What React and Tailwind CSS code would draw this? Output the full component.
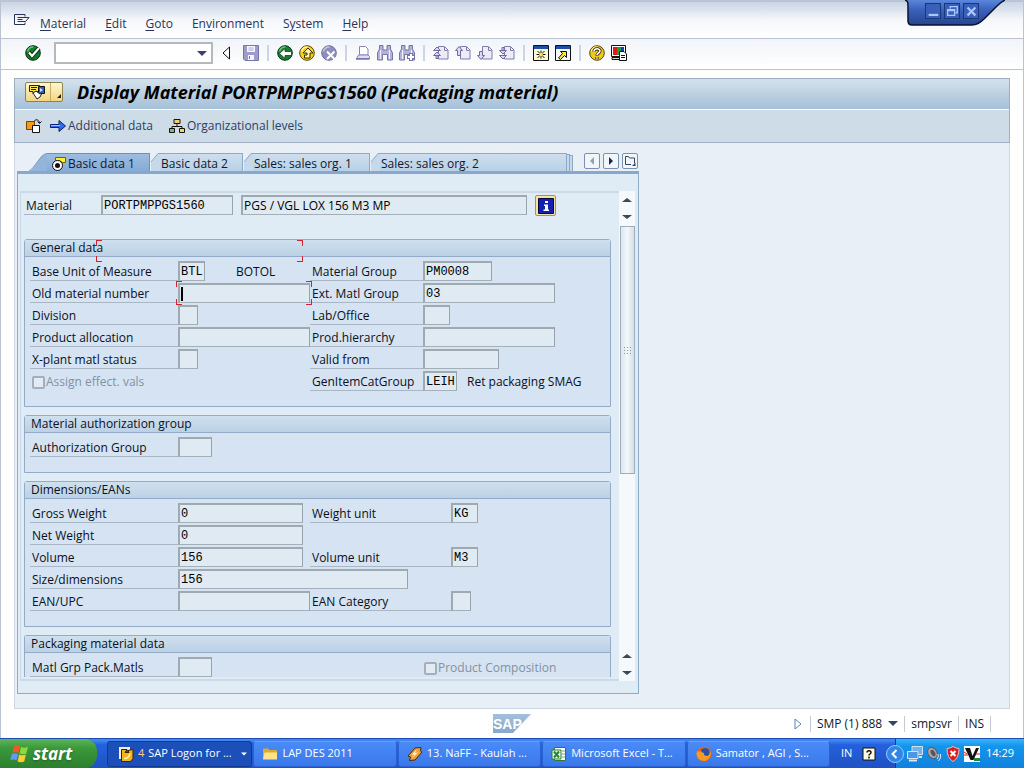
import clsx from "clsx";

const menuItems = [
  ["", "M", "aterial"],
  ["", "E", "dit"],
  ["", "G", "oto"],
  ["En", "v", "ironment"],
  ["S", "y", "stem"],
  ["", "H", "elp"],
];

const Icon = ({ children, className = "size-4", viewBox = "0 0 16 16" }) => (
  <svg viewBox={viewBox} className={clsx("shrink-0", className)} fill="none" aria-hidden="true">
    {children}
  </svg>
);

const IconButton = ({ label, children, className }) => (
  <button type="button" aria-label={label} title={label} className={clsx("flex shrink-0", className)}>
    {children}
  </button>
);

const Separator = () => <span className="mx-0.5 h-4 w-0.5 shrink-0 bg-[#ccd5e4]" />;

const PageIcon = ({ children }) => (
  <Icon>
    <path d="M5.500 1.500h6l3.500 3.500v9h-9.500z" fill="#ececf7" stroke="#7f7dae" />
    <path d="M11.500 2v3.500h3" stroke="#7f7dae" />
    <g stroke="#6c6a9e" fill="#dcdbee">
      {children}
    </g>
  </Icon>
);

const Ball = ({ fill, edge, shine }) => (
  <>
    <circle cx="8" cy="8" r="7.300" fill={fill} stroke={edge} />
    <path d="M2.500 6.500a6 6 0 0 1 6-4.500" stroke={shine} strokeWidth="1.500" />
  </>
);

const Binoculars = () => (
  <>
    <path
      d="M.5 15V8L2.500 4V.5h3.500V5h4V.5h3.500V4l2 4v7h-5V9.500h-5V15z"
      fill="#b3b2d8"
      stroke="#7775a6"
    />
    <path d="M3.500 5v9M12.500 5v9" stroke="#f2f2fb" />
  </>
);

const MenuBar = () => (
  <nav className="relative flex h-[37px] items-center border-b border-[#bcc3cd] bg-linear-to-b from-[#c9d4e4] via-[#f5f7fb] via-50% to-white pt-2 pl-[13px] text-[12px] text-[#28335a]">
    <IconButton label="System menu" className="-mt-2 mr-2.5">
      <Icon>
        <path d="M11 4.500V2.500H.5v10H11v-2" stroke="#28335a" />
        <path d="M3.500 5.500H15L11.500 9.500h-8M3.500 7.500h5" stroke="#28335a" />
      </Icon>
    </IconButton>
    <div className="flex gap-[19px]">
      {menuItems.map(([before, key, after]) => (
        <button type="button" key={before + key + after}>
          {before}
          <u className="underline-offset-2">{key}</u>
          {after}
        </button>
      ))}
    </div>
    <div className="absolute -top-0.5 right-[18px] h-[28px] w-[100px]">
      <svg viewBox="0 0 100 28" className="absolute inset-0 size-full" aria-hidden="true">
        <defs>
          <linearGradient id="chip" x1="0" y1="0" x2="0" y2="1">
            <stop offset="0" stopColor="#5a86dc" />
            <stop offset="0.4" stopColor="#3a61ba" />
            <stop offset="1" stopColor="#24458f" />
          </linearGradient>
        </defs>
        <path d="M0 0C3 1 3 3 3 6v15q0 4 4 4h60q6 0 12-6L92 6q4-4 8-6z" fill="url(#chip)" />
        <path
          d="M0 0C3 1 3 3 3 6v15q0 4 4 4h60q6 0 12-6L92 6q4-4 8-6"
          fill="none"
          stroke="#0a1230"
          strokeWidth="1.500"
        />
      </svg>
      <div className="relative flex gap-[3px] pt-[3px] pl-[20px]">
        <IconButton label="Minimize" className="size-4 border border-[#1b3679] bg-[#3a5fb8]">
          <Icon className="size-3.5">
            <path d="M3 12.500h11" stroke="#a9c8ff" strokeWidth="2.500" />
          </Icon>
        </IconButton>
        <IconButton label="Restore" className="size-4 border border-[#1b3679] bg-[#3a5fb8]">
          <Icon className="size-3.5">
            <path d="M6 5V3h8v7h-2" stroke="#a9c8ff" strokeWidth="1.500" />
            <path d="M3 6.500h8V13H3zM3 7.500h8" stroke="#a9c8ff" strokeWidth="1.500" />
          </Icon>
        </IconButton>
        <IconButton label="Close" className="size-4 border border-[#1b3679] bg-[#3a5fb8]">
          <Icon className="size-3.5">
            <path d="M4 4l9 9M13 4l-9 9" stroke="#a9c8ff" strokeWidth="2.500" />
          </Icon>
        </IconButton>
      </div>
    </div>
  </nav>
);

const Toolbar = () => (
  <div className="flex h-[31px] items-center gap-1.5 border-b border-[#bcc3cd] bg-linear-to-b from-[#f1f4f9] to-white pb-0.5 pl-6">
    <IconButton label="Enter" className="mr-[7px]">
      <Icon>
        <Ball fill="#147a2c" edge="#06300f" shine="#6cc47e" />
        <path d="M4 7.500l3 3.500 7-8" stroke="#04240a" strokeWidth="4" />
        <path d="M4 7.500l3 3.500 7-8" stroke="#fff" strokeWidth="2.200" />
      </Icon>
    </IconButton>
    <div className="relative flex">
      <input
        type="text"
        aria-label="Command"
        defaultValue=""
        className="h-[22px] w-[159px] border-2 border-[#b3b9bc] bg-white px-1 text-[12px] outline-none"
      />
      <IconButton label="Command history" className="absolute top-1.5 right-1.5">
        <Icon className="h-2.5 w-2.5" viewBox="0 0 10 10">
          <path d="M0 3h10L5 8z" fill="#37436e" />
        </Icon>
      </IconButton>
    </div>
    <IconButton label="Collapse">
      <Icon>
        <path d="M10.500 2v12L4 8z" fill="#fff" stroke="#111" />
      </Icon>
    </IconButton>
    <IconButton label="Save" className="ml-0.5">
      <Icon>
        <path d="M.5.500h15v15H2L.5 14z" fill="#9d9ccb" stroke="#7775a6" />
        <path d="M4 1h8v6H4z" fill="#f5f5fc" />
        <path d="M5 10h6v5H5z" fill="#f5f5fc" />
        <path d="M5.500 3h5M5.500 5h5" stroke="#a8a7d0" />
        <path d="M6.500 11v3" stroke="#7775a6" />
      </Icon>
    </IconButton>
    <Separator />
    <IconButton label="Back">
      <Icon>
        <Ball fill="#17802f" edge="#06300f" shine="#6cc47e" />
        <path d="M2.500 8.500L8 3.500v3h6.500v4H8v3z" fill="#fff" stroke="#06300f" strokeWidth=".7" />
      </Icon>
    </IconButton>
    <IconButton label="Exit">
      <Icon>
        <Ball fill="#f4cf1c" edge="#5b4704" shine="#fff4a0" />
        <path d="M9 3l5 5h-3v5H5.500v-3H8V8H4z" fill="#fff7b0" stroke="#3a2b00" />
      </Icon>
    </IconButton>
    <IconButton label="Cancel">
      <Icon>
        <Ball fill="#8f8dbb" edge="#7270a2" shine="#c6c5e2" />
        <path d="M6 6.500l7.500 7.500M13.500 6.500L6 14" stroke="#fff" strokeWidth="2" />
      </Icon>
    </IconButton>
    <Separator />
    <IconButton label="Print">
      <Icon>
        <path d="M4.500 1.500h6l2.500 2.500v6h-8.500z" fill="#fff" stroke="#8886b4" />
        <path d="M1.500 13.500l2-3.500h9.500l1.500 1.500v2z" fill="#dddcf0" stroke="#8886b4" />
        <path d="M1 14h13.500" stroke="#7775a6" strokeWidth="1.500" />
      </Icon>
    </IconButton>
    <IconButton label="Find">
      <Icon>
        <Binoculars />
      </Icon>
    </IconButton>
    <IconButton label="Find next">
      <Icon>
        <Binoculars />
        <path d="M12 8v8M8 12h8" stroke="#7775a6" strokeWidth="4" />
        <path d="M12 9v6M9 12h6" stroke="#fff" strokeWidth="2" />
      </Icon>
    </IconButton>
    <Separator />
    <IconButton label="First page">
      <PageIcon>
        <path d="M.5 5.500l3.500-3.500 3.500 3.500zM.5 10.500L4 7l3.500 3.500zM3 11v2.500h2V11" />
      </PageIcon>
    </IconButton>
    <IconButton label="Previous page">
      <PageIcon>
        <path d="M.5 5.500L4 1.500l3.500 4h-2v5h-3v-5z" />
      </PageIcon>
    </IconButton>
    <IconButton label="Next page">
      <PageIcon>
        <path d="M.5 10.500l3.500 4 3.500-4h-2v-4h-3v4z" />
      </PageIcon>
    </IconButton>
    <IconButton label="Last page">
      <PageIcon>
        <path d="M3 5V2.500h2V5M.5 5.500L4 9l3.500-3.500zM.5 10.500L4 14l3.500-3.500z" />
      </PageIcon>
    </IconButton>
    <Separator />
    <IconButton label="New session">
      <Icon>
        <path d="M.5.500h15v15H.5z" fill="#fffbd0" stroke="#111" />
        <path d="M1 1h14v3H1z" fill="#1f4fa3" />
        <path d="M8 5.500v8M3.500 9.500h9M4.500 6l7 7M11.500 6l-7 7" stroke="#111" />
        <circle cx="8" cy="9.500" r="1.800" fill="#ffe83c" />
      </Icon>
    </IconButton>
    <IconButton label="Create shortcut">
      <Icon>
        <path d="M.5.500h15v15H.5z" fill="#f3f6fb" stroke="#111" />
        <path d="M1 1h14v3H1z" fill="#1f4fa3" />
        <path d="M5.500 6.500h6v6l-2-2-4 4-2-1.500 4-4.500z" fill="#ffe83c" stroke="#111" />
      </Icon>
    </IconButton>
    <Separator />
    <IconButton label="Help">
      <Icon>
        <Ball fill="#f2c81b" edge="#5b4704" shine="#fff4a0" />
        <path d="M5 6.500C5 3 11 3 11 6c0 2-3 2-3 4.500M8 12v2" stroke="#2b1f00" strokeWidth="3.200" />
        <path d="M5 6.500C5 3 11 3 11 6c0 2-3 2-3 4M8 12.200v1.500" stroke="#fff" strokeWidth="1.600" />
      </Icon>
    </IconButton>
    <IconButton label="Customize local layout">
      <Icon>
        <path d="M.5.500h14v11H.5z" fill="#fff" stroke="#111" />
        <path d="M2 2h4v8H2z" fill="#e01919" />
        <path d="M6 2h4v8H6z" fill="#0ca63d" />
        <path d="M10 2h3v8h-3z" fill="#2036c8" />
        <path d="M1 12.500h8v2H1z" fill="#d8d8d8" stroke="#111" />
        <path d="M8.500 6.500h4.500l2.500 2.500v6.500h-7z" fill="#fff" stroke="#111" />
        <path d="M10 10.500h4M10 12.500h4" stroke="#111" />
      </Icon>
    </IconButton>
  </div>
);

const Header = () => (
  <header className="border border-[#9fafc1] bg-[#cddce7]">
    <div className="flex h-[31px] items-center gap-3.5 border-b border-white bg-linear-to-b from-[#d0dfea] from-10% via-[#b4cbdd] via-65% to-[#a6c1da] pb-1 pl-2.5">
      <button
        type="button"
        aria-label="Services for object"
        className="flex h-5 w-[38px] items-center rounded-[2px] border border-[#8c8250] bg-linear-to-b from-[#fff6cf] to-[#f3d77e] pl-0.5"
      >
        <Icon className="h-4 w-5" viewBox="0 0 20 16">
          <path d="M1.500 1.500h10v6H7l-2 2v-2H1.500z" fill="#ffe94a" stroke="#222" />
          <path d="M3 3.500h6M3 5.500h5" stroke="#222" />
          <path d="M10.500 2.500h6v7h-6z" fill="#2f62b5" stroke="#111" />
          <path d="M12 4l3 2-3 2z" fill="#cfe0ff" />
          <path d="M5 9l3-2 4 3 2-1-2 4-3 2z" fill="#fff" stroke="#222" />
        </Icon>
        <span className="ml-0.5 h-full w-px bg-[#c6ae62]" />
        <Icon className="mt-2 ml-1.5 size-1" viewBox="0 0 4 4">
          <path d="M4 0v4H0z" fill="#222" />
        </Icon>
      </button>
      <h1 className="text-[18px] leading-6 font-bold whitespace-nowrap text-black italic">
        Display Material PORTPMPPGS1560 (Packaging material)
      </h1>
    </div>
    <div className="flex h-8 items-center gap-2 pl-[11px] text-[12px] text-[#2c3f68]">
      <IconButton label="Select view">
        <Icon>
          <path d="M.5 3.500h8v8h-8z" fill="#f29a1c" stroke="#7a4300" />
          <path d="M6.500 7.500h7v7h-7z" fill="#fff" stroke="#111" />
          <path d="M8 3.500C9 1 13 1 13.500 5M11.500 3.500l2 2 2-2" stroke="#111" />
        </Icon>
      </IconButton>
      <button type="button" className="flex items-center gap-0.5">
        <Icon>
          <path d="M.5 6.500h8.500V2.500L15.500 8 9 13.500V9.500H.5z" fill="#2f6cf0" stroke="#0b1f6b" />
          <path d="M1 7.500h9" stroke="#9cc2ff" />
        </Icon>
        Additional data
      </button>
      <button type="button" className="ml-2 flex items-center gap-0.5">
        <Icon>
          <path d="M8 5v3.500M3 11V8.500h10V11" stroke="#111" />
          <path d="M5 1.500h6v4H5z" fill="#f0d27a" stroke="#111" />
          <path d="M.5 10.500h5v4h-5z" fill="#7fb98a" stroke="#111" />
          <path d="M10.500 10.500h5v4h-5z" fill="#e6df5e" stroke="#111" />
        </Icon>
        Organizational levels
      </button>
    </div>
  </header>
);

const Tab = ({ label, active, className }) => (
  <button
    type="button"
    role="tab"
    aria-selected={Boolean(active)}
    className={clsx("flex h-[18px] shrink-0 text-[12px] text-[#10182c]", !active && "ml-px")}
  >
    <svg
      viewBox={active ? "0 0 18 18" : "0 0 9 18"}
      className={clsx("h-[18px] shrink-0", active ? "w-[18px]" : "w-[9px]")}
      fill="none"
      aria-hidden="true"
    >
      {active ? (
        <>
          <path d="M0 18C6 17 10 .5 18 .5V18z" fill="#93b5da" />
          <path d="M0 18C5 16 12 .5 18 .5" stroke="#7d9cc0" />
        </>
      ) : (
        <>
          <path d="M0 9L7 .5h2V18H0z" fill="#c6d9ea" />
          <path d="M0 9L7 .5h2" stroke="#8da9c4" />
        </>
      )}
    </svg>
    <span
      className={clsx(
        "flex h-full items-center gap-px border-t border-r pt-0.5 leading-4",
        active
          ? "border-[#6e90ba] bg-linear-to-b from-[#9dbde0] to-[#86abd5] pl-1"
          : "border-[#8da9c4] bg-linear-to-b from-[#cddfee] to-[#b9d0e6] pl-px",
        className
      )}
    >
      {active && (
        <Icon>
          <path d="M4.500 1.500h10v5h-3l-3-2h-4z" fill="#ffee2e" stroke="#6f6400" />
          <circle cx="6.500" cy="9.500" r="5" fill="#fff" stroke="#111" />
          <circle cx="6.500" cy="9.500" r="2.500" fill="#111" />
        </Icon>
      )}
      {label}
    </span>
  </button>
);

const TabNav = ({ label, children }) => (
  <IconButton
    label={label}
    className="size-4 items-center justify-center rounded-[2px] border border-[#7d90ae] bg-[#f1f6fb]"
  >
    {children}
  </IconButton>
);

const TabStrip = () => (
  <div className="flex pr-px pl-3">
    <div role="tablist" className="flex">
      <Tab label="Basic data 1" active className="w-[103px]" />
      <Tab label="Basic data 2" className="w-[83px]" />
      <Tab label="Sales: sales org. 1" className="w-[117px]" />
      <Tab label="Sales: sales org. 2" className="w-[187px]" />
    </div>
    <span className="mt-px h-[17px] w-[3px] border-t border-r border-[#8da9c4] bg-[#c6d9ea]" />
    <span className="mt-0.5 h-4 w-[3px] border-t border-r border-[#8da9c4] bg-[#c6d9ea]" />
    <div className="ml-auto flex gap-[3px]">
      <TabNav label="Scroll tabs left">
        <Icon className="size-2" viewBox="0 0 8 8">
          <path d="M6 0v8L2 4z" fill="#94a1b4" />
        </Icon>
      </TabNav>
      <TabNav label="Scroll tabs right">
        <Icon className="size-2" viewBox="0 0 8 8">
          <path d="M2 0v8l4-4z" fill="#1c2a4a" />
        </Icon>
      </TabNav>
      <TabNav label="Tab list">
        <Icon className="size-3" viewBox="0 0 12 12">
          <path d="M7 9.500H1.500v-8h3l1 1.500h5V8" stroke="#33456c" />
          <path d="M11.500 7.500V11H8z" fill="#33456c" />
        </Icon>
      </TabNav>
    </div>
  </div>
);

const Brackets = ({ className }) => (
  <span className={clsx("pointer-events-none absolute", className)}>
    <span className="absolute top-0 left-0 size-1.5 border-t border-l border-[#cf2233]" />
    <span className="absolute top-0 right-0 size-1.5 border-t border-r border-[#cf2233]" />
    <span className="absolute bottom-0 left-0 size-1.5 border-b border-l border-[#cf2233]" />
    <span className="absolute right-0 bottom-0 size-1.5 border-r border-b border-[#cf2233]" />
  </span>
);

const Box = ({ id, value = "", className, label, sans }) => (
  <input
    id={id}
    type="text"
    aria-label={label}
    readOnly
    value={value}
    className={clsx(
      "h-5 shrink-0 border-t-2 border-r border-b border-l-2 border-t-[#9ea9b0] border-r-[#98a3ab] border-b-[#a4afb7] border-l-[#9ea9b0] bg-[#dfeaf2] pl-px text-[12px] text-black outline-none",
      !sans && "font-['Liberation_Mono',monospace]",
      className
    )}
  />
);

const Label = ({ htmlFor, children, className }) => (
  <label
    htmlFor={htmlFor}
    className={clsx("h-5 shrink-0 border-b border-[#a9b7c4] pl-0.5 leading-[22px] whitespace-nowrap", className)}
  >
    {children}
  </label>
);

// one line of a group: an optional field on the left and one on the right
const Row = ({ left, right, rightLabel = "w-[113px]" }) => (
  <div className="mb-0.5 flex h-5">
    <div className="flex w-[280px] shrink-0">
      {left && (
        <>
          <Label htmlFor={left.id} className="w-[148px]">
            {left.label}
          </Label>
          <span className="relative flex">
            <Box id={left.id} value={left.value} className={left.width} />
            {left.focused && (
              <>
                <Brackets className="-inset-x-0.5 -inset-y-0.5 z-10" />
                <span className="absolute top-1 left-[3px] h-3.5 w-0.5 bg-black" />
              </>
            )}
          </span>
          {left.text && <span className="pl-[31px] leading-[22px]">{left.text}</span>}
        </>
      )}
    </div>
    {right && (
      <>
        <Label htmlFor={right.id} className={rightLabel}>
          {right.label}
        </Label>
        <Box id={right.id} value={right.value} className={right.width} />
      </>
    )}
  </div>
);

const Check = ({ label, className }) => (
  <label className={clsx("flex h-5 items-center gap-px pt-0.5 text-[#8492a0]", className)}>
    <input
      type="checkbox"
      disabled
      className="size-[13px] appearance-none rounded-[2px] border-2 border-[#a3afba] bg-[#e2ebf3]"
    />
    {label}
  </label>
);

const Group = ({ title, children, className = "mb-2 border-b pb-[13px]" }) => (
  <section className={clsx("rounded-t-[3px] border-x border-t border-[#93abc6] bg-[#d5e3f3]", className)}>
    <h2 className="h-[17px] border-b border-[#93abc6] bg-linear-to-b from-[#cfe0ee] to-[#bcd1e6] pl-1.5 leading-4">
      {title}
    </h2>
    <div className="pt-1 pl-[5px]">{children}</div>
  </section>
);

const Arrow = ({ label, up }) => (
  <IconButton label={label} className="h-[17px] w-4 items-center justify-center bg-[#f6f9fc]">
    <Icon className="size-2.5" viewBox="0 0 10 10">
      <path d={up ? "M0 7l5-4 5 4z" : "M0 3h10L5 7z"} fill="#3c4a54" />
    </Icon>
  </IconButton>
);

const ScrollBar = () => (
  <div className="flex w-4 shrink-0 flex-col bg-[#f6f9fc]">
    <Arrow label="Scroll up" up />
    <Arrow label="Scroll down" />
    <div className="flex-1">
      <div className="mt-px ml-px flex h-[248px] items-center justify-center border border-[#9fadba] bg-linear-to-r from-[#dde7ef] via-[#f3f7fa] to-[#d3dfe9]">
        <span className="grid grid-cols-3 gap-0.5">
          {Array.from({ length: 9 }, (_, i) => (
            <i key={i} className="size-px bg-[#8394a5]" />
          ))}
        </span>
      </div>
    </div>
    <Arrow label="Page up" up />
    <Arrow label="Page down" />
  </div>
);

const MaterialForm = () => (
  <div className="flex border-x border-t-[3px] border-b border-[#8eabc8] border-t-[#85a8cf] bg-[#dfebf5] pt-[17px] pr-[3px] pb-3 pl-0.5">
    <div className="min-w-0 flex-1 border-y-2 border-l border-[#cddae5] pr-2 pb-0.5 pl-[3px] text-[12px] text-[#0b1020]">
      <div className="mt-0.5 mb-6 flex h-5">
        <Label htmlFor="material" className="w-[77px]">
          Material
        </Label>
        <Box id="material" value="PORTPMPPGS1560" className="w-[132px]" />
        <Box
          id="description"
          label="Description"
          value="PGS / VGL LOX 156 M3 MP"
          className="ml-2 w-[286px]"
          sans
        />
        <IconButton
          label="Info"
          className="ml-2 h-[21px] w-[21px] items-center justify-center rounded-[2px] border border-[#a8924f] bg-[#f7e3a6]"
        >
          <Icon>
            <path d="M.5.500h15v15H.5z" fill="#1420b4" stroke="#05083a" />
            <path d="M7 3h3v2H7zM6 6.500h4v5h1V13H5.500v-1.500H7V8H6z" fill="#fff" />
          </Icon>
        </IconButton>
      </div>

      <div className="relative">
        <Group title="General data">
          <Row
            left={{ id: "uom", label: "Base Unit of Measure", value: "BTL", width: "w-[27px]", text: "BOTOL" }}
            right={{ id: "matgroup", label: "Material Group", value: "PM0008", width: "w-[69px]" }}
          />
          <Row
            left={{ id: "oldnumber", label: "Old material number", width: "w-[132px]", focused: true }}
            right={{ id: "extgroup", label: "Ext. Matl Group", value: "03", width: "w-[132px]" }}
          />
          <Row
            left={{ id: "division", label: "Division", width: "w-5" }}
            right={{ id: "lab", label: "Lab/Office", width: "w-[27px]" }}
          />
          <Row
            left={{ id: "allocation", label: "Product allocation", width: "w-[132px]" }}
            right={{ id: "hierarchy", label: "Prod.hierarchy", width: "w-[132px]" }}
          />
          <Row
            left={{ id: "xplant", label: "X-plant matl status", width: "w-5" }}
            right={{ id: "validfrom", label: "Valid from", width: "w-[76px]" }}
          />
          <div className="mb-0.5 flex h-5">
            <Check label="Assign effect. vals" className="w-[280px] pl-0.5" />
            <Label htmlFor="itemcat" className="w-[113px]">
              GenItemCatGroup
            </Label>
            <Box id="itemcat" value="LEIH" className="w-[34px]" />
            <span className="pl-2.5 leading-[22px] whitespace-nowrap">Ret packaging SMAG</span>
          </div>
        </Group>
        <Brackets className="top-px left-[72px] h-[22px] w-[207px]" />
      </div>

      <Group title="Material authorization group">
        <Row left={{ id: "authgroup", label: "Authorization Group", width: "w-[34px]" }} />
      </Group>

      <Group title="Dimensions/EANs">
        <Row
          left={{ id: "gross", label: "Gross Weight", value: "0", width: "w-[125px]" }}
          right={{ id: "weightunit", label: "Weight unit", value: "KG", width: "w-[27px]" }}
          rightLabel="w-[141px]"
        />
        <Row left={{ id: "net", label: "Net Weight", value: "0", width: "w-[125px]" }} />
        <Row
          left={{ id: "volume", label: "Volume", value: "156", width: "w-[125px]" }}
          right={{ id: "volumeunit", label: "Volume unit", value: "M3", width: "w-[27px]" }}
          rightLabel="w-[141px]"
        />
        <Row left={{ id: "size", label: "Size/dimensions", value: "156", width: "w-[230px]" }} />
        <Row
          left={{ id: "ean", label: "EAN/UPC", width: "w-[132px]" }}
          right={{ id: "eancat", label: "EAN Category", width: "w-5" }}
          rightLabel="w-[141px]"
        />
      </Group>

      <Group title="Packaging material data" className="">
        <div className="flex">
          <Label htmlFor="packgroup" className="w-[148px]">
            Matl Grp Pack.Matls
          </Label>
          <Box id="packgroup" className="w-[34px]" />
          <Check label="Product Composition" className="ml-[212px]" />
        </div>
      </Group>
    </div>
    <ScrollBar />
  </div>
);

const StatusBar = () => (
  <footer className="grid h-[29px] grid-cols-3 items-center px-8 text-[12px] text-[#10182c]">
    <span />
    <svg viewBox="0 0 38 19" className="h-[19px] w-[38px] justify-self-center" role="img" aria-label="SAP">
      <defs>
        <linearGradient id="sap" x1="0" y1="0" x2="0" y2="1">
          <stop offset="0" stopColor="#a3bfdb" />
          <stop offset="1" stopColor="#87a9cc" />
        </linearGradient>
      </defs>
      <path d="M0 0h38L20 19H0z" fill="url(#sap)" />
      <text x="0" y="14.500" fill="#fff" fontSize="14" fontWeight="700" fontFamily="Liberation Sans, sans-serif">
        SAP
      </text>
    </svg>
    <div className="flex items-center justify-end gap-1.5 whitespace-nowrap">
      <IconButton label="Show messages">
        <Icon className="size-3" viewBox="0 0 12 12">
          <path d="M3 1v10l6-5z" fill="#fff" stroke="#5c80b3" />
        </Icon>
      </IconButton>
      <span className="h-4 w-px bg-[#c4cad3]" />
      <span>SMP (1) 888</span>
      <IconButton label="System info">
        <Icon className="size-2.5" viewBox="0 0 10 10">
          <path d="M0 2h10L5 7z" fill="#33436e" />
        </Icon>
      </IconButton>
      <span className="h-4 w-px bg-[#c4cad3]" />
      <span>smpsvr</span>
      <span className="h-4 w-px bg-[#c4cad3]" />
      <span>INS</span>
      <span className="h-4 w-px bg-[#c4cad3]" />
    </div>
  </footer>
);

const Task = ({ icon, label, active }) => (
  <button
    type="button"
    className={clsx(
      "flex h-[26px] min-w-0 flex-1 items-center gap-1 rounded-[3px] border text-left whitespace-nowrap",
      active
        ? "border-[#123a94] bg-[#1c4fb8] pl-2.5"
        : "border-[#2a62d6] border-t-[#6ba0fa] bg-linear-to-b from-[#4a8bf7] to-[#3a78ea] pl-2"
    )}
  >
    <Icon>{icon}</Icon>
    {label}
    {active && (
      <Icon className="mr-1 ml-auto size-1.5" viewBox="0 0 6 6">
        <path d="M0 1.500h6L3 4.500z" fill="#fff" />
      </Icon>
    )}
  </button>
);

const Taskbar = () => (
  <div className="flex h-[30px] items-center border-t border-[#1c4cb4] bg-linear-to-b from-[#3f86f2] from-5% via-[#2560dc] via-20% to-[#1f52c4] text-[11px] text-white">
    <button
      type="button"
      className="flex h-full w-[97px] shrink-0 items-center gap-1 rounded-r-xl bg-linear-to-b from-[#5fb45c] via-[#3c9a3b] via-30% to-[#2c7f2e] pl-2.5 text-[17px] font-bold text-white italic text-shadow-md"
    >
      <Icon className="size-[19px]" viewBox="0 0 18 18">
        <path d="M4 2q3-2 5.500 0L8 8.500Q5 6.500 2 8.500z" fill="#ee5a24" />
        <path d="M10.500 2.500q3 2 6.500 0l-1.500 6.500q-3 1.500-6.500-.3z" fill="#8ed83a" />
        <path d="M1.700 9.500q3-1.700 6 0l-1.500 6q-3-1.700-6 0z" fill="#5c9cf5" />
        <path d="M8.700 10q3 1.500 6.300 0l-1.500 6.500q-3 1.500-6.300 0z" fill="#fccf2e" />
      </Icon>
      start
    </button>
    <div className="flex min-w-0 flex-1 gap-px pl-2.5">
      <Task
        active
        label={
          <>
            <span className="text-[#ffc9a0]">4</span> SAP Logon for ...
          </>
        }
        icon={
          <>
            <path d="M1 1h11v3H4v9H1z" fill="#e8f0fa" />
            <path d="M3.500 3.500H9l-2 3h4l-1-2 5-1v9l-2.500 3h-9z" fill="#f6b21b" stroke="#3a2600" />
            <path d="M6 12.500q5 0 6-5" stroke="#fff3b0" strokeWidth="1.500" />
          </>
        }
      />
      <Task
        label="LAP DES 2011"
        icon={
          <>
            <path d="M1 3.500q0-1 1-1h4l1.500 1.500H14q1 0 1 1v8H1z" fill="#e2a92f" />
            <path d="M1 13.500l1.500-7H15v7z" fill="#ffe48a" />
          </>
        }
      />
      <Task
        label="13. NaFF - Kaulah ..."
        icon={
          <>
            <path d="M8 2l6-.5L13.500 5l1.500 1-7 8-5.500.5L3.500 11 1 10z" fill="#f0a03a" stroke="#4b2a05" />
            <path d="M10 3L4.500 9l3-.5L5 12.500l6-6-3 .5z" fill="#fff0c8" />
          </>
        }
      />
      <Task
        label="Microsoft Excel - T..."
        icon={
          <>
            <path d="M3.500 1.500h11v13h-11z" fill="#fff" stroke="#2c7a35" />
            <path d="M11 5h3M11 8h3M11 11h3" stroke="#6fb077" />
            <path d="M1 4h9v9H1z" fill="#eaf6ea" stroke="#2c7a35" />
            <path d="M3 5.500l5 6M8 5.500l-5 6" stroke="#1f8a32" strokeWidth="2" />
          </>
        }
      />
      <Task
        label="Samator , AGI , S..."
        icon={
          <>
            <circle cx="8" cy="8" r="7.500" fill="#e8641b" />
            <circle cx="9" cy="6.500" r="4.500" fill="#2c4fa8" />
            <path d="M1 5q2 1 4 0 1 2 3 2-1 3 4 3 2-2 2.500-5Q16 12 9 15 1 15 .5 8z" fill="#f59a22" />
          </>
        }
      />
    </div>
    <div className="flex h-full w-[65px] shrink-0 items-center gap-2.5 pl-[11px]">
      <span>IN</span>
      <IconButton label="Language help">
        <Icon className="size-3.5" viewBox="0 0 14 14">
          <path d="M1 1h12v12H1z" fill="#fffbe0" stroke="#111" />
          <path d="M5 5.500C5 3 9 3 9 5.500 9 7 7 7 7 8.500M7 9.500v2" stroke="#111" strokeWidth="1.500" />
        </Icon>
      </IconButton>
    </div>
    <div className="flex h-full w-[129px] shrink-0 items-center gap-[3px] border-l border-[#0c3c9c] bg-linear-to-b from-[#35b4f8] via-[#1495ec] via-25% to-[#1181dd]">
      <IconButton label="Show hidden icons" className="-ml-2.5">
        <Icon className="size-[18px]" viewBox="0 0 18 18">
          <circle cx="9" cy="9" r="8.500" fill="#2f86e6" stroke="#9ccaf8" />
          <path d="M10.500 5L6.500 9l4 4" stroke="#fff" strokeWidth="2" />
        </Icon>
      </IconButton>
      <Icon>
        <path d="M5 .5h10.500v8H5z" fill="#6fb2f2" stroke="#d5e2f0" />
        <path d="M.5 5.500H11v7H.5z" fill="#4c97e4" stroke="#d5e2f0" />
        <path d="M2 14.500h8M12 11h3" stroke="#dfe6ee" strokeWidth="2" />
      </Icon>
      <Icon>
        <ellipse cx="6.500" cy="7" rx="4.500" ry="6" fill="#a2a4a9" stroke="#5c5e63" transform="rotate(-30 6.500 7)" />
        <ellipse cx="7" cy="7" rx="2" ry="3.500" fill="#55575c" transform="rotate(-30 7 7)" />
        <path d="M12 8q1 3-1 5M14.500 8q1 4-2 7" stroke="#dce9f7" />
      </Icon>
      <Icon>
        <path d="M8 .5q3 2 6 2Q14 12 8 15.500 2 12 2 2.500q3 0 6-2z" fill="#d81f1f" stroke="#f3b9b9" />
        <path d="M5.500 5l5 5M10.500 5l-5 5" stroke="#fff" strokeWidth="2" />
      </Icon>
      <Icon>
        <path d="M0 0h16v16H0z" fill="#fff" />
        <path d="M1 2h5l2.500 8L12 2h3L9.500 14H6.500z" fill="#111" />
        <path d="M0 6l3 2M0 9h4M12 8h4" stroke="#c22" />
        <path d="M10 12h6v3h-6z" fill="#1f8a32" />
      </Icon>
      <time className="ml-[3px]">14:29</time>
    </div>
  </div>
);

export default function App() {
  return (
    <div className="flex min-h-screen flex-col border-t-2 border-[#bac4d4] bg-white font-['Open_Sans',sans-serif]">
      <div className="flex flex-1 flex-col border-x border-[#b9c3d3]">
        <MenuBar />
        <Toolbar />
        <main className="mx-[13px] mt-2 flex flex-1 flex-col border-b border-[#cdd6e2] bg-[#e8eff7]">
          <Header />
          <div className="flex-1 border-x border-[#cdd6e2] pt-2.5 pb-3 pl-0.5">
            <div className="w-full max-w-[622px]">
              <TabStrip />
              <MaterialForm />
            </div>
          </div>
        </main>
        <StatusBar />
      </div>
      <Taskbar />
    </div>
  );
}
